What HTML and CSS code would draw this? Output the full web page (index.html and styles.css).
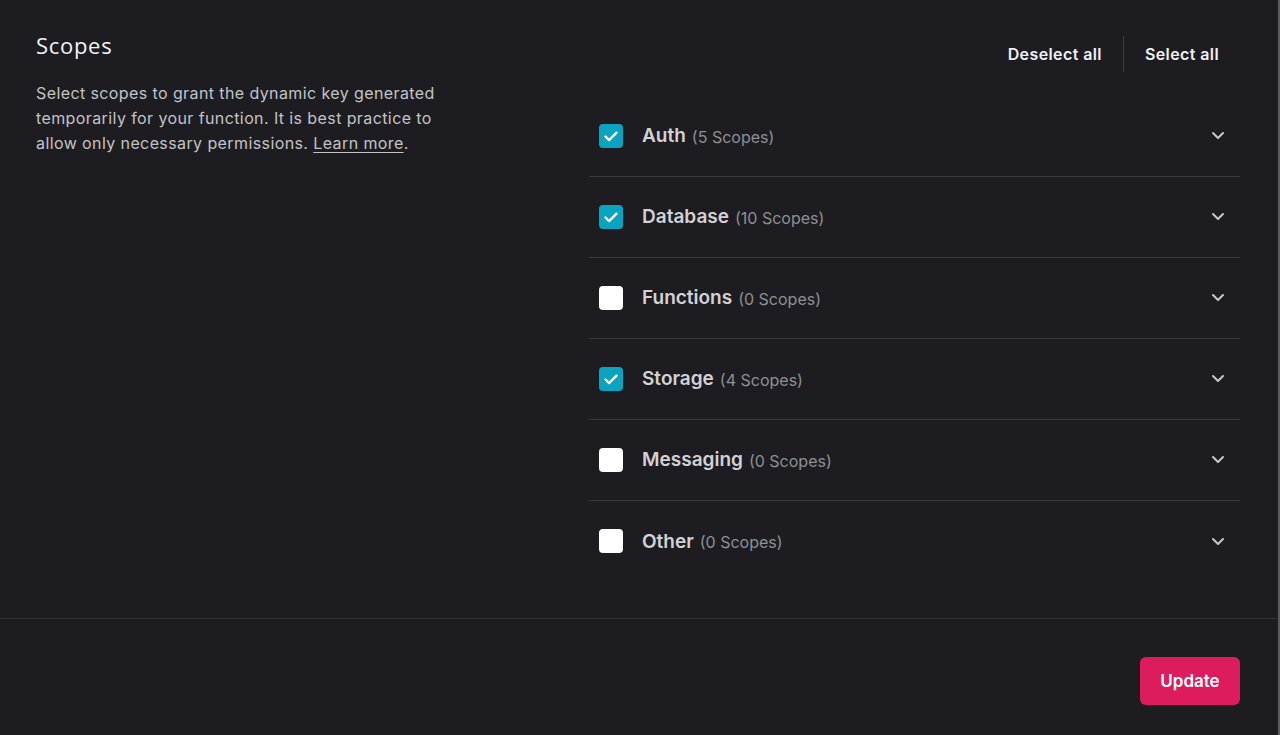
FILE: index.html
```html
<!DOCTYPE html>
<html lang="en">
<head>
<meta charset="utf-8">
<title>Scopes</title>
<link rel="stylesheet" href="styles.css">
</head>
<body>
<div class="page">
  <main class="main">
    <section class="intro">
      <h2 class="title">Scopes</h2>
      <p class="desc">Select scopes to grant the dynamic key generated temporarily for your function. It is best practice to allow only necessary permissions. <a href="#" class="link">Learn more</a>.</p>
    </section>
    <section class="scopes">
      <div class="actions">
        <button class="action">Deselect all</button>
        <span class="sep"></span>
        <button class="action">Select all</button>
      </div>
      <ul class="list">
        <li class="row"><span class="box checked"><svg viewBox="0 0 24 24" width="24" height="24"><path d="M6.5 12.5l3.6 3.6L17.5 8.7" fill="none" stroke="#fff" stroke-width="2.4" stroke-linecap="round" stroke-linejoin="round"/></svg></span><span class="name">Auth</span><span class="count">(5 Scopes)</span><svg class="chev" viewBox="0 0 14 9" width="14" height="9"><path d="M2 2l5 5 5-5" fill="none" stroke="#c8c8cb" stroke-width="2" stroke-linecap="round" stroke-linejoin="round"/></svg></li>
        <li class="row"><span class="box checked"><svg viewBox="0 0 24 24" width="24" height="24"><path d="M6.5 12.5l3.6 3.6L17.5 8.7" fill="none" stroke="#fff" stroke-width="2.4" stroke-linecap="round" stroke-linejoin="round"/></svg></span><span class="name">Database</span><span class="count">(10 Scopes)</span><svg class="chev" viewBox="0 0 14 9" width="14" height="9"><path d="M2 2l5 5 5-5" fill="none" stroke="#c8c8cb" stroke-width="2" stroke-linecap="round" stroke-linejoin="round"/></svg></li>
        <li class="row"><span class="box"></span><span class="name">Functions</span><span class="count">(0 Scopes)</span><svg class="chev" viewBox="0 0 14 9" width="14" height="9"><path d="M2 2l5 5 5-5" fill="none" stroke="#c8c8cb" stroke-width="2" stroke-linecap="round" stroke-linejoin="round"/></svg></li>
        <li class="row"><span class="box checked"><svg viewBox="0 0 24 24" width="24" height="24"><path d="M6.5 12.5l3.6 3.6L17.5 8.7" fill="none" stroke="#fff" stroke-width="2.4" stroke-linecap="round" stroke-linejoin="round"/></svg></span><span class="name">Storage</span><span class="count">(4 Scopes)</span><svg class="chev" viewBox="0 0 14 9" width="14" height="9"><path d="M2 2l5 5 5-5" fill="none" stroke="#c8c8cb" stroke-width="2" stroke-linecap="round" stroke-linejoin="round"/></svg></li>
        <li class="row"><span class="box"></span><span class="name">Messaging</span><span class="count">(0 Scopes)</span><svg class="chev" viewBox="0 0 14 9" width="14" height="9"><path d="M2 2l5 5 5-5" fill="none" stroke="#c8c8cb" stroke-width="2" stroke-linecap="round" stroke-linejoin="round"/></svg></li>
        <li class="row"><span class="box"></span><span class="name">Other</span><span class="count">(0 Scopes)</span><svg class="chev" viewBox="0 0 14 9" width="14" height="9"><path d="M2 2l5 5 5-5" fill="none" stroke="#c8c8cb" stroke-width="2" stroke-linecap="round" stroke-linejoin="round"/></svg></li>
      </ul>
    </section>
  </main>
  <footer class="footer">
    <button class="update">Update</button>
  </footer>
</div>
</body>
</html>
```
FILE: styles.css
```css
* { box-sizing: border-box; }
html, body { margin: 0; padding: 0; }
body {
  background: #1d1d21;
  font-family: Inter, "Liberation Sans", sans-serif;
  color: #c4c4c7;
  height: 735px;
  overflow: hidden;
}
.page {
  height: 735px;
  border-right: 2px solid #5c5c60;
  display: flex;
  flex-direction: column;
}
.main {
  display: flex;
  padding: 0 38px 36px 36px;
  border-bottom: 1px solid #2f2f33;
}
.intro {
  flex: 1;
  padding-top: 31px;
}
.title {
  margin: 0;
  font-family: "Open Sans", Inter, sans-serif;
  font-weight: 500;
  font-size: 22px;
  letter-spacing: 0.7px;
  line-height: 28px;
  color: #f2f2f4;
}
.desc {
  margin: 22px 0 0;
  width: 430px;
  font-size: 16px;
  letter-spacing: 0.4px;
  line-height: 25px;
  color: #c3c3c6;
}
.link { color: #c3c3c6; text-decoration: underline; text-underline-offset: 3px; }
.scopes {
  width: 651px;
  padding-top: 36px;
}
.actions {
  display: flex;
  justify-content: flex-end;
  align-items: stretch;
  height: 36px;
  margin-bottom: 24px;
}
.action {
  background: none;
  border: 0;
  padding: 0 21px;
  font-family: Inter, sans-serif;
  font-size: 16px;
  font-weight: 600;
  letter-spacing: 0.4px;
  color: #f0f0f2;
}
.sep { width: 1px; background: #3c3c40; }
.list { list-style: none; margin: 0; padding: 0; }
.row {
  display: flex;
  align-items: center;
  height: 81px;
  padding: 0 15px 1px 10px;
  border-bottom: 1px solid #38383c;
}
.row:last-child { border-bottom: 0; }
.box {
  width: 24px;
  height: 24px;
  border-radius: 4px;
  background: #ffffff;
  margin-right: 19px;
  flex: none;
  display: flex;
}
.box.checked { background: #0aa4c1; }
.name {
  font-size: 19px;
  font-weight: 600;
  color: #d2d2d5;
  margin-right: 6px;
}
.count {
  font-size: 16px;
  color: #8f8f94;
  padding-top: 2px;
}
.chev { margin-left: auto; }
.footer {
  display: flex;
  justify-content: flex-end;
  padding: 38px 38px 0 0;
}
.update {
  width: 100px;
  height: 48px;
  border: 0;
  border-radius: 6px;
  background: #dc1c5c;
  color: #fff;
  font-family: Inter, sans-serif;
  font-size: 17px;
  font-weight: 600;
}
```
